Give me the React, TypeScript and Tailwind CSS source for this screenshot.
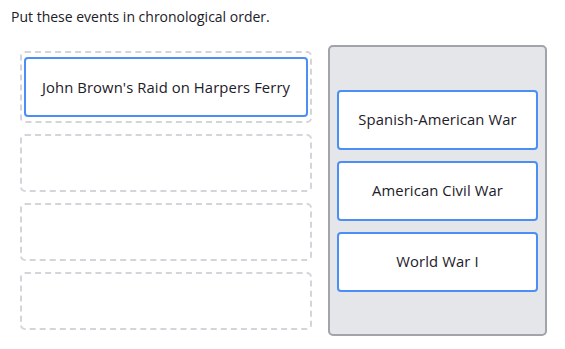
const placed = ["John Brown's Raid on Harpers Ferry", null, null, null];
const bank = ["Spanish-American War", "American Civil War", "World War I"];

function EventCard({ label, width }: { label: string; width: string }) {
  return (
    <div
      className={`${width} h-[60px] flex items-center justify-center rounded-[4px] border-2 border-[#4b8ff4] bg-white text-[14.8px] tracking-[0.1px] text-[#1c2029]`}
    >
      {label}
    </div>
  );
}

export default function App() {
  return (
    <div
      className="w-[565px] h-[349px] bg-white pt-[7px]"
      style={{ fontFamily: '"Open Sans", "Liberation Sans", sans-serif' }}
    >
      <p className="px-[11px] text-[14px] leading-[20px] text-[#1c2029]">
        Put these events in chronological order.
      </p>

      <div className="mt-[18px] flex items-center gap-[16px] pl-[20px]">
        {/* Answer slots */}
        <div className="flex flex-col gap-[11px]">
          {placed.map((item, i) =>
            item ? (
              <div
                key={i}
                className="w-[292px] rounded-[5px] border-2 border-dashed border-[#d4d5da] px-[2px] py-[4px]"
              >
                <EventCard label={item} width="w-full" />
              </div>
            ) : (
              <div
                key={i}
                className="w-[292px] h-[58px] rounded-[5px] border-2 border-dashed border-[#d4d5da]"
              />
            )
          )}
        </div>

        {/* Choice bank */}
        <div className="w-[219px] h-[291px] flex flex-col justify-center gap-[11px] rounded-[5px] border-2 border-[#a1a4ab] bg-[#e5e6ea] px-[7px]">
          {bank.map((b) => (
            <EventCard key={b} label={b} width="w-full" />
          ))}
        </div>
      </div>
    </div>
  );
}
